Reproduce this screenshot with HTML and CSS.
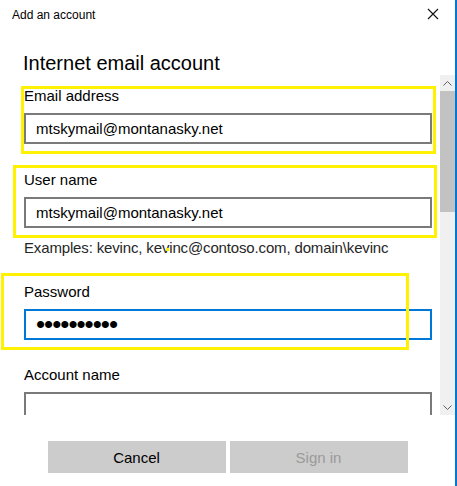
FILE: index.html
```html
<!DOCTYPE html>
<html>
<head>
  <title>Add an account</title>
  <meta charset="utf-8">
  <link rel="stylesheet" href="styles.css">
</head>
<body>
  <div class="window">
    <div class="titlebar">
      <span class="title">Add an account</span>
      <svg class="close" width="12" height="12" viewBox="0 0 12 12">
        <path d="M1 1 L11 11 M11 1 L1 11" stroke="#111" stroke-width="1.1" fill="none"/>
      </svg>
    </div>

    <h1 class="heading">Internet email account</h1>

    <div class="scroll-area">
      <div class="form">
        <div class="field">
          <label>Email address</label>
          <input type="text" value="mtskymail@montanasky.net">
        </div>
        <div class="field field-user">
          <label>User name</label>
          <input type="text" value="mtskymail@montanasky.net">
        </div>
        <p class="hint">Examples: kevinc, kevinc@contoso.com, domain\kevinc</p>
        <div class="field field-pass">
          <label>Password</label>
          <input type="password" class="focused" value="xxxxxxxxxx">
        </div>
        <div class="field field-account">
          <label>Account name</label>
          <input type="text" value="">
        </div>
      </div>
      <div class="scrollbar">
        <div class="arrow">
          <svg width="9" height="5" viewBox="0 0 9 5"><path d="M0.5 4.5 L4.5 0.5 L8.5 4.5" stroke="#606060" fill="none"/></svg>
        </div>
        <div class="thumb"></div>
        <div class="track"></div>
        <div class="arrow">
          <svg width="9" height="5" viewBox="0 0 9 5"><path d="M0.5 0.5 L4.5 4.5 L8.5 0.5" stroke="#606060" fill="none"/></svg>
        </div>
      </div>
    </div>

    <div class="footer">
      <button class="btn">Cancel</button>
      <button class="btn" disabled>Sign in</button>
    </div>

    <!-- highlight marks drawn over the screenshot -->
    <div class="mark mark-email"></div>
    <div class="mark mark-user"></div>
    <div class="mark mark-pass"></div>
    <div class="mark-dot"></div>
  </div>
</body>
</html>
```

FILE: styles.css
```css
* {
  margin: 0;
  padding: 0;
  box-sizing: border-box;
}

body {
  font-family: "Liberation Sans", Arial, sans-serif;
  background: white;
  color: #000;
}

.window {
  position: relative;
  width: 457px;
  height: 486px;
  border-right: 2px solid #0078d7;
  background: white;
  display: flex;
  flex-direction: column;
}

.titlebar {
  height: 30px;
  display: flex;
  align-items: center;
  justify-content: space-between;
  padding: 0 16px 0 12px;
}

.title {
  font-size: 12px;
  color: #000;
}

.close {
  margin-top: -2px;
}

.heading {
  font-size: 20px;
  font-weight: normal;
  color: #000;
  margin: 21px 0 0 23px;
  line-height: 25px;
}

.scroll-area {
  margin-top: -1px;
  height: 340px;
  display: flex;
}

.form {
  flex: 1;
  overflow: hidden;
  padding: 11px 8px 0 24px;
}

.field {
  display: flex;
  flex-direction: column;
}

.field label {
  font-size: 15px;
  line-height: 20px;
  color: #000;
  margin-bottom: 7px;
}

.field input {
  flex-shrink: 0;
  height: 31px;
  border: 2px solid #7a7a7a;
  padding: 0 10px;
  font-family: inherit;
  font-size: 15px;
  color: #000;
  background: white;
  outline: none;
}

.field input.focused {
  border-color: #0078d7;
  font-size: 26px;
  letter-spacing: -1px;
  padding-left: 10px;
}

.field-user {
  margin-top: 26px;
}

.hint {
  margin-top: 10px;
  font-size: 15px;
  line-height: 20px;
  letter-spacing: -0.15px;
  color: #262626;
}

.field-pass {
  margin-top: 24px;
}

.field-account {
  margin-top: 25px;
}

.scrollbar {
  width: 15px;
  background: #f0f0f0;
  display: flex;
  flex-direction: column;
}

.arrow {
  height: 16px;
  display: flex;
  align-items: center;
  justify-content: center;
}

.thumb {
  height: 121px;
  background: #c2c2c2;
}

.track {
  flex: 1;
}

.footer {
  display: flex;
  justify-content: center;
  gap: 4px;
  margin-top: 26px;
}

.btn {
  width: 178px;
  height: 32px;
  border: none;
  background: #cccccc;
  font-family: inherit;
  font-size: 15px;
  color: #000;
}

.btn:disabled {
  color: #9a9a9a;
}

.mark {
  position: absolute;
  border: 3px solid #fff200;
}

.mark-email {
  left: 21px;
  top: 86px;
  width: 415px;
  height: 68px;
}

.mark-user {
  left: 13px;
  top: 165px;
  width: 424px;
  height: 73px;
}

.mark-pass {
  left: 1px;
  top: 273px;
  width: 408px;
  height: 77px;
}

.mark-dot {
  position: absolute;
  left: 166px;
  top: 248px;
  width: 3px;
  height: 3px;
  background: #fff200;
}
```
